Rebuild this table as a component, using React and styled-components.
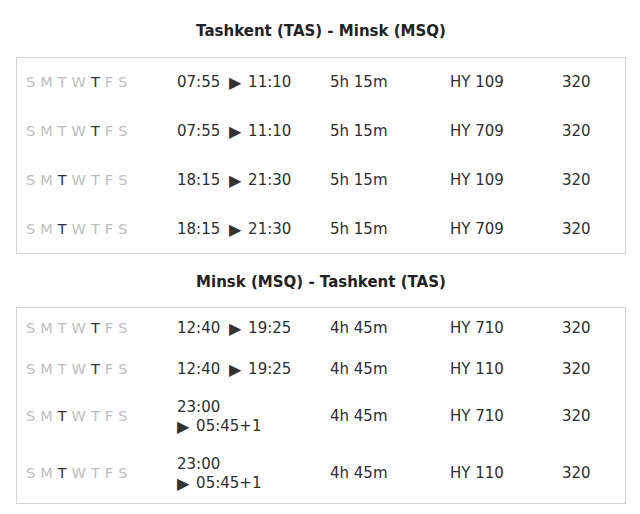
import React from 'react';
import styled, { createGlobalStyle } from 'styled-components';

const DAYS = ['S', 'M', 'T', 'W', 'T', 'F', 'S'];

const routes = [
  {
    title: 'Tashkent (TAS) - Minsk (MSQ)',
    rows: [
      { day: 4, dep: '07:55', arr: '11:10', dur: '5h 15m', flight: 'HY 109', price: '320', h: 49 },
      { day: 4, dep: '07:55', arr: '11:10', dur: '5h 15m', flight: 'HY 709', price: '320', h: 49 },
      { day: 2, dep: '18:15', arr: '21:30', dur: '5h 15m', flight: 'HY 109', price: '320', h: 49 },
      { day: 2, dep: '18:15', arr: '21:30', dur: '5h 15m', flight: 'HY 709', price: '320', h: 48 },
    ],
  },
  {
    title: 'Minsk (MSQ) - Tashkent (TAS)',
    rows: [
      { day: 4, dep: '12:40', arr: '19:25', dur: '4h 45m', flight: 'HY 710', price: '320', h: 41 },
      { day: 4, dep: '12:40', arr: '19:25', dur: '4h 45m', flight: 'HY 110', price: '320', h: 40 },
      { day: 2, dep: '23:00', arr: '05:45+1', dur: '4h 45m', flight: 'HY 710', price: '320', h: 55, wrap: true },
      { day: 2, dep: '23:00', arr: '05:45+1', dur: '4h 45m', flight: 'HY 110', price: '320', h: 59, wrap: true },
    ],
  },
];

const App = () => {
  return (
    <>
      <GlobalStyle />
      <Page>
        {routes.map((route, i) => (
          <Section key={i}>
            <Title first={i === 0}>{route.title}</Title>
            <Table>
              {route.rows.map((r, j) => (
                <Row key={j} h={r.h}>
                  <Days>
                    {DAYS.map((d, k) => (
                      <Day key={k} active={k === r.day}>{d}</Day>
                    ))}
                  </Days>
                  <Time>
                    {r.dep}
                    {r.wrap ? <br /> : ' '}
                    <Arrow lead={!r.wrap}>▶</Arrow> {r.arr}
                  </Time>
                  <Cell>{r.dur}</Cell>
                  <Cell>{r.flight}</Cell>
                  <Cell>{r.price}</Cell>
                </Row>
              ))}
            </Table>
          </Section>
        ))}
      </Page>
    </>
  );
};

export default App;

const GlobalStyle = createGlobalStyle`
  body {
    margin: 0;
    background: #fff;
    font-family: "DejaVu Sans", "Liberation Sans", sans-serif;
    color: #333;
  }
`;

const Page = styled.div`
  width: 640px;
  padding: 0 14px 0 16px;
  box-sizing: border-box;
`;

const Section = styled.section`
  display: flex;
  flex-direction: column;
`;

const Title = styled.h2`
  margin: 0;
  padding: ${p => (p.first ? '21px 0 16px' : '18px 0 15px')};
  font-size: 15px;
  line-height: 20px;
  font-weight: bold;
  color: #222;
  text-align: center;
`;

const Table = styled.div`
  border: 1px solid #d2d2d2;
  display: flex;
  flex-direction: column;
`;

const Row = styled.div`
  display: grid;
  grid-template-columns: 151px 153px 120px 112px 1fr;
  align-items: center;
  height: ${p => p.h}px;
  padding-left: 9px;
  font-size: 15px;
  line-height: 19px;
  color: #2e2e2e;
`;

const Days = styled.div`
  display: flex;
  gap: 5px;
  font-size: 14.5px;
`;

const Day = styled.span`
  color: ${p => (p.active ? '#333' : '#bdbdbd')};
`;

const Time = styled.div`
  white-space: nowrap;
`;

const Arrow = styled.span`
  display: inline-block;
  font-size: 16px;
  line-height: 1;
  vertical-align: -1px;
  margin: 0 2px 0 ${p => (p.lead ? '4px' : '0')};
  color: #333;
`;

const Cell = styled.div`
  white-space: nowrap;
`;
